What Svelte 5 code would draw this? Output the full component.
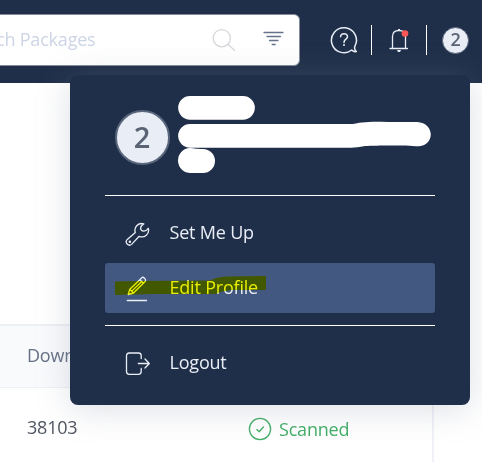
<script>
  const items = [
    { id: 'setup', label: 'Set Me Up' },
    { id: 'edit', label: 'Edit Profile' },
    { id: 'logout', label: 'Logout' }
  ];
</script>

<div class="page">
  <header>
    <div class="search">
      <span class="placeholder">Search Packages</span>
      <svg class="magnifier" width="24" height="24" viewBox="0 0 24 24">
        <circle cx="9.8" cy="10.2" r="8.6" />
        <path d="M16 16.5 22.5 22.3" />
      </svg>
      <svg class="filter" width="22" height="16" viewBox="0 0 22 16">
        <path d="M1 2.5H20M4 6.5H17.5M6.5 10.5H15M9.2 14.5H12.2" />
      </svg>
    </div>
    <div class="actions">
      <svg class="help" width="28" height="28" viewBox="0 0 28 28">
        <path d="M21.7 24A12.5 12.5 0 1 1 24.9 20.2C24.1 22.7 24.8 24.3 26.3 25.6C24.7 26 22.8 25.2 21.7 24Z" />
        <path d="M10.6 10.8C10.7 6.5 17.7 6.7 17.5 10.8C17.4 13.2 14 13.2 14 16.4" />
        <circle cx="14" cy="19.1" r="1" class="solid" />
      </svg>
      <i class="rule"></i>
      <svg class="bell" width="20" height="26" viewBox="0 0 20 26">
        <path d="M1 21.5H18.4M3.5 21V9.5C3.5 5.5 6.2 3.5 10 3.5S16.5 5.5 16.5 9.5V21" />
        <path d="M9 2H11V3.5H9ZM8 23H12L11 25H9Z" class="solid" />
        <circle cx="16" cy="6.5" r="3.3" class="alert" />
      </svg>
      <i class="rule"></i>
      <span class="avatar small">2</span>
    </div>
  </header>

  <main>
    <div class="row head">Downloads</div>
    <div class="row">
      <span class="count">38103</span>
      <span class="status">
        <svg width="24" height="24" viewBox="0 0 24 24">
          <circle cx="12" cy="12" r="10.6" />
          <path d="m8.8 12.6 2.4 2.2 4.2-4.8" />
        </svg>
        Scanned
      </span>
    </div>
  </main>

  <div class="menu">
    <div class="profile">
      <span class="avatar">2</span>
      <svg class="masked" width="254" height="80" viewBox="0 0 254 80">
        <path d="M13 2H66A11.8 11.8 0 0 1 66 25.7H13A11.8 11.8 0 0 1 13 2Z" />
        <path d="M13 30H176C184 28 192 27.7 204 27.7C218 28 230 28.2 240 28C258 29 258 51 242 52.3C227 51 200 51.3 188 52C182 53 178 53.7 174 53.7H13A11.8 11.8 0 0 1 13 30Z" />
        <path d="M13 54C16 54 18 55 26 55A11.8 11.8 0 0 1 26 79H14A12.4 12.4 0 0 1 13 54Z" />
      </svg>
    </div>
    <nav>
      {#each items as item (item.id)}
        <div class="item {item.id}">
          <svg width="26" height="28" viewBox="0 0 26 28">
            {#if item.id === 'setup'}
              <path d="M18.8 4.9A6.7 6.7 0 0 0 10.3 13.4L2.3 20.4A3.2 3.2 0 0 0 6.8 25.1L14.2 17.3A6.7 6.7 0 0 0 23.3 9.3Q21.2 12.2 18.8 12.1Q15.8 11.9 15.6 9.2Q15.6 6.8 18.8 4.9Z" />
              <circle cx="4.9" cy="22.8" r="0.6" />
            {:else if item.id === 'edit'}
              <path d="M3.2 20.5 4.8 15.2 16.9 3.7Q18 2.8 19.2 3.9L20.2 5.1Q21.1 6.3 20.1 7.5L8.5 19ZM4.8 15.2 8.5 19M6.8 17.1 17 7.3M14.7 5.7 18.4 9.3" />
              <path d="M2.3 26.5H21.5" />
            {:else}
              <path d="M16.2 9.6V6.7Q16.2 4 13.5 4H4.2Q1.5 4 1.5 6.7V22.6Q1.5 25.3 4.2 25.3H13.5Q16.2 25.3 16.2 22.6V19.5M13.3 14.5H24M20 10 24.3 14.5 20 19" />
            {/if}
          </svg>
          <span>{item.label}</span>
        </div>
      {/each}
    </nav>
    <svg class="marker" width="151" height="20" viewBox="0 0 151 20">
      <path d="M0 5.5 22 5 95 4.5Q102 1 111 0.5L151 0V14H116Q106 15 101 18H39L0 19Z" />
    </svg>
  </div>
</div>

<style>
  .page {
    position: relative;
    width: 482px;
    height: 462px;
    overflow: hidden;
    background: #fff;
    font: 18px/24px "Open Sans", "Noto Sans", sans-serif;
    letter-spacing: -0.2px;
  }
  svg {
    display: block;
    flex: none;
    fill: none;
    stroke: #e9eef6;
    stroke-width: 1.3;
    stroke-linecap: round;
    stroke-linejoin: round;
  }
  header {
    display: flex;
    align-items: flex-start;
    box-sizing: border-box;
    height: 83px;
    padding-top: 14px;
    background: #202f49;
  }
  .search {
    display: flex;
    align-items: center;
    box-sizing: border-box;
    width: 340px;
    height: 52px;
    margin-left: -40.5px;
    padding-right: 16px;
    border: 1px solid #858b98;
    border-radius: 6px;
    background: #fff;
  }
  .placeholder {
    width: 135px;
    flex: none;
    display: flex;
    justify-content: flex-end;
    white-space: nowrap;
    color: #ccd4e6;
    padding-bottom: 2px;
  }
  .magnifier { margin-left: 116px; stroke: #d6d7da; }
  .filter { margin: -4px 0 0 27px; stroke: #65738c; stroke-width: 1.3; }
  .actions { display: flex; align-items: center; height: 52px; margin-left: 30.5px; }
  .help { stroke-width: 1.5; }
  .rule { width: 1px; height: 30px; margin-left: 13px; background: #fff; }
  .bell { margin-left: 17px; }
  .bell + .rule { margin-left: 17px; }
  .solid { fill: #e9eef6; stroke: none; }
  .alert { fill: #ff5757; stroke: none; }
  .avatar {
    display: flex;
    align-items: center;
    justify-content: center;
    box-sizing: border-box;
    flex: none;
    width: 55px;
    height: 55px;
    border: 2px solid #58657b;
    border-radius: 50%;
    background: #e9eef6;
    color: #5a6474;
    font-size: 29px;
    font-weight: 600;
  }
  .small {
    width: 27px;
    height: 27px;
    margin-left: 15px;
    padding-bottom: 2px;
    border-width: 1px;
    font-size: 18px;
  }
  main {
    box-sizing: border-box;
    width: 434px;
    height: 379px;
    padding-top: 241px;
    border-right: 2px solid #f0f1f7;
  }
  .row {
    display: flex;
    align-items: center;
    height: 78px;
    padding-left: 27px;
    color: #505661;
  }
  .head {
    box-sizing: border-box;
    height: 64px;
    padding-bottom: 3px;
    border-top: 2px solid #edf0f5;
    border-bottom: 1px solid #edf0f5;
    background: #f9fafc;
    color: #667084;
  }
  .count { width: 221px; }
  .status { display: flex; align-items: center; gap: 7px; padding-top: 3px; color: #42ae66; }
  .status svg { stroke: #42ae66; stroke-width: 1.3; }
  .menu {
    position: absolute;
    left: 70px;
    top: 75px;
    box-sizing: border-box;
    width: 400px;
    height: 330px;
    padding: 0 35px;
    border-radius: 8px;
    background: #202f49;
    box-shadow: 0 4px 34px rgba(130, 140, 160, 0.28);
  }
  .profile {
    display: flex;
    align-items: center;
    gap: 8px;
    box-sizing: border-box;
    height: 121px;
    padding: 4px 0 0 9.5px;
    border-bottom: 1px solid #fff;
  }
  .masked { margin: -6px 0 0 -0.5px; fill: #fff; stroke: none; }
  .item {
    display: flex;
    align-items: center;
    gap: 18.5px;
    height: 50px;
    padding-left: 20px;
    border-radius: 3px;
    color: #e9eef6;
  }
  .setup { margin: 12px 0 5px; }
  .edit { background: #425880; }
  .logout { margin-top: 12px; padding-top: 12px; border-top: 1px solid #fff; border-radius: 0; }
  .item span { padding-bottom: 2px; }
  .marker {
    position: absolute;
    left: 45px;
    top: 201px;
    fill: #ff0;
    stroke: none;
    mix-blend-mode: multiply;
  }
</style>
